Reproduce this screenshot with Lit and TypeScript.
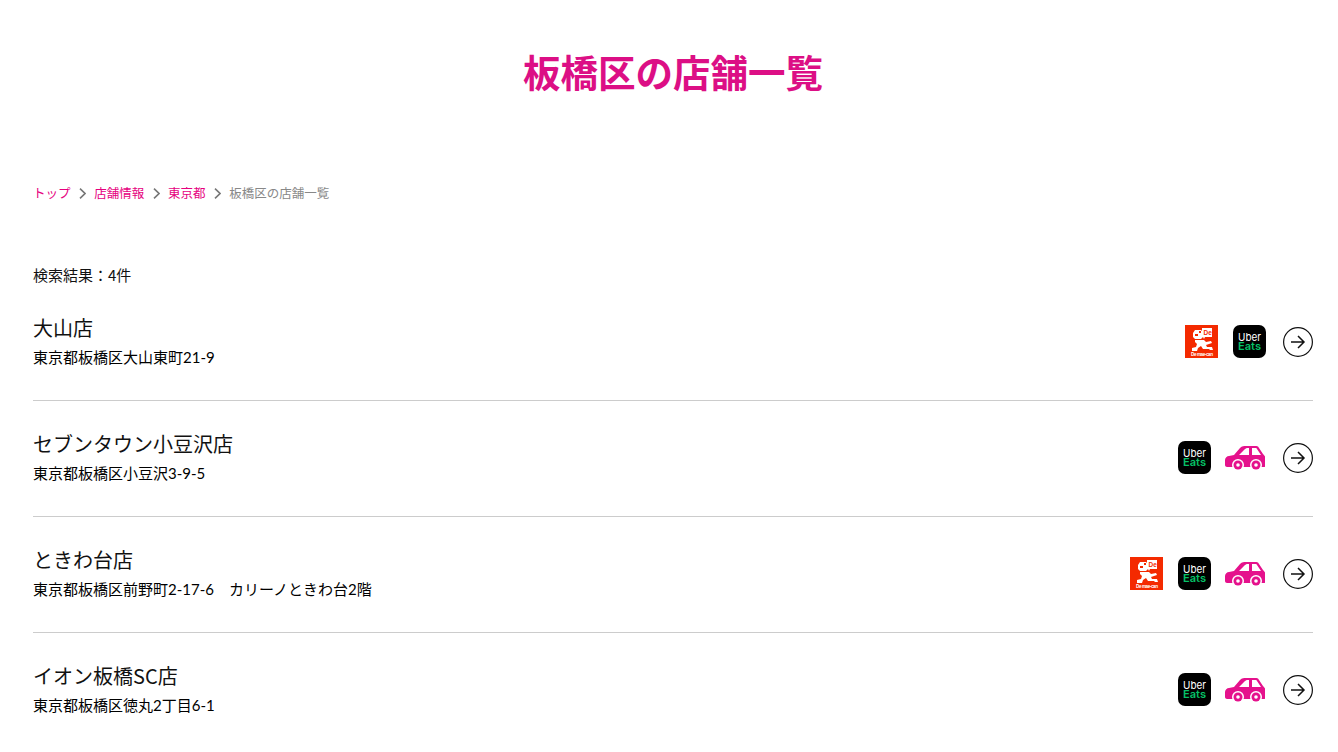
import { LitElement, html, css, svg } from "lit";
import { customElement } from "lit/decorators.js";

type Service = "demae" | "uber" | "car";

const shops: { name: string; address: string; services: Service[] }[] = [
  { name: "大山店", address: "東京都板橋区大山東町21-9", services: ["demae", "uber"] },
  { name: "セブンタウン小豆沢店", address: "東京都板橋区小豆沢3-9-5", services: ["uber", "car"] },
  { name: "ときわ台店", address: "東京都板橋区前野町2-17-6　カリーノときわ台2階", services: ["demae", "uber", "car"] },
  { name: "イオン板橋SC店", address: "東京都板橋区徳丸2丁目6-1", services: ["uber", "car"] },
];

const crumbs = ["トップ", "店舗情報", "東京都"];

const demaeIcon = html`
  <svg class="logo" viewBox="0 0 33 33">
    <rect width="33" height="33" fill="#f42a00" />
    ${svg`
      <path fill="#fff" d="M8 8l2-3h6l2 2v5l-2 2h-6l-2-2z" />
      <path fill="#fff" d="M17 3h10v9h-7l-1 2-1-2h-1z" />
      <path fill="#f42a00" d="M10 9h3v2h-3zM14 6h2v2h-2z" />
      <text x="18.5" y="10" font-size="6.5" font-weight="700" fill="#f42a00" font-family="Liberation Sans, sans-serif">De</text>
      <path fill="#fff" d="M10 15h9l2 2 5-1 1 2-6 2 1 2 5 0 1 3h-3l-1-1-6 0-2-3-3 2-1 3H7v-3l4-1 1-3-2-2z" />
      <text x="6" y="31" font-size="4.6" font-weight="700" fill="#fff" font-family="Liberation Sans, sans-serif" textLength="22">De mae-can</text>
    `}
  </svg>
`;

const uberIcon = html`
  <svg class="logo" viewBox="0 0 33 33">
    <rect width="33" height="33" rx="7" fill="#000" />
    <text x="5" y="15.7" font-size="11" fill="#fff" font-family="Inter, sans-serif" textLength="23" lengthAdjust="spacingAndGlyphs">Uber</text>
    <text x="5" y="24.7" font-size="11" font-weight="600" fill="#06c167" font-family="Inter, sans-serif" textLength="23" lengthAdjust="spacingAndGlyphs">Eats</text>
  </svg>
`;

const carIcon = html`
  <svg class="car" viewBox="0 0 40 26">
    <path fill="#e5118c" d="M0 15c0-2 2-4 4-4l5-1 6-7c2-2 4-2 6-2h9c2 0 3 0 4 2l4 6c2 2 3 4 3 7v4c0 1-1 2-2 2H2c-1 0-2-1-2-2z" />
    <path fill="#fff" d="M14 10l5-5c1-1 2-2 3-2h2v7zM27 3h3c1 0 2 0 2 1l4 6h-9z" />
    <circle cx="13" cy="20" r="6" fill="#fff" />
    <circle cx="31" cy="20" r="6" fill="#fff" />
    <circle cx="13" cy="20" r="4.5" fill="#e5118c" />
    <circle cx="31" cy="20" r="4.5" fill="#e5118c" />
    <circle cx="13" cy="20" r="1.8" fill="#fff" />
    <circle cx="31" cy="20" r="1.8" fill="#fff" />
  </svg>
`;

const icons = { demae: demaeIcon, uber: uberIcon, car: carIcon };

@customElement("app-root")
export class AppRoot extends LitElement {
  static styles = css`
    :host {
      display: block;
      padding: 0 25px 0 33px;
      background: #fff;
      color: #111;
      font-family: "Noto Sans CJK JP", "Liberation Sans", sans-serif;
    }
    h1 {
      margin: 0;
      padding-top: 45px;
      font-size: 37.5px;
      line-height: 52px;
      font-weight: 700;
      text-align: center;
      color: #dc0f85;
    }
    .crumbs {
      display: flex;
      align-items: center;
      margin-top: 86px;
      font-size: 12.5px;
      line-height: 20px;
      color: #888;
    }
    .crumbs a {
      color: #e6007e;
      text-decoration: none;
    }
    .crumbs svg {
      width: 7px;
      height: 11px;
      margin: 0 8px 0 8.75px;
    }
    .count {
      margin-top: 62px;
      font-size: 15px;
      line-height: 20px;
    }
    .row {
      display: flex;
      align-items: center;
      justify-content: space-between;
      padding: 30px 0 31px;
      border-bottom: 1px solid #ccc;
    }
    .row:last-child {
      border-bottom: none;
    }
    .name {
      font-size: 20px;
      line-height: 26px;
    }
    .address {
      margin-top: 4px;
      font-family: Lato, "Noto Sans CJK JP", sans-serif;
      font-size: 15px;
      line-height: 24px;
      color: #000;
    }
    .services {
      display: flex;
      align-items: center;
      gap: 15px;
    }
    .logo {
      display: block;
      width: 33px;
      height: 33px;
      margin-top: -1px;
    }
    .car {
      display: block;
      width: 40px;
      height: 26px;
      margin: 0 1px 0 -1px;
    }
    .go {
      display: block;
      width: 30px;
      height: 30px;
      margin-left: 2px;
    }
  `;

  render() {
    return html`
      <h1>板橋区の店舗一覧</h1>
      <nav class="crumbs">
        ${crumbs.map(
          (c) => html`
            <a href="#">${c}</a>
            <svg viewBox="0 0 7 11">
              <path d="M1 0.7L6 5.5L1 10.3" fill="none" stroke="#777" stroke-width="1.6" />
            </svg>
          `
        )}
        <span>板橋区の店舗一覧</span>
      </nav>
      <div class="count">検索結果：4件</div>
      <div class="list">
        ${shops.map(
          (s) => html`
            <div class="row">
              <div>
                <div class="name">${s.name}</div>
                <div class="address">${s.address}</div>
              </div>
              <div class="services">
                ${s.services.map((k) => icons[k])}
                <svg class="go" viewBox="0 0 30 30">
                  <circle cx="15" cy="15" r="14.4" fill="none" stroke="#111" stroke-width="1.2" />
                  <path d="M8 15H21M15 9l6 6l-6 6" fill="none" stroke="#111" stroke-width="1.5" />
                </svg>
              </div>
            </div>
          `
        )}
      </div>
    `;
  }
}
